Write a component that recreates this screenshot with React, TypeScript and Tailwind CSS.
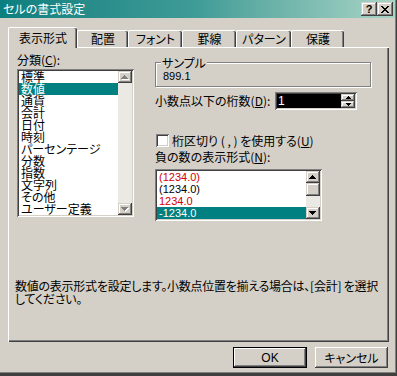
import React from "react";

const RAISED =
  "shadow-[inset_-1px_-1px_#404040,inset_1px_1px_#ffffff,inset_-2px_-2px_#808080]";
const RAISED_TB =
  "shadow-[inset_-1px_-1px_#404040,inset_1px_1px_#d4d0c8,inset_-2px_-2px_#808080,inset_2px_2px_#ffffff]";
const SUNKEN =
  "shadow-[inset_1px_1px_#808080,inset_-1px_-1px_#ffffff,inset_2px_2px_#404040,inset_-2px_-2px_#d4d0c8]";

function Arrow({ dir, disabled }: { dir: "up" | "down"; disabled?: boolean }) {
  const d =
    dir === "up"
      ? "M3 0h1v1h1v1h1v1h1v1H0V3h1V2h1V1h1z"
      : "M0 0h7v1h-1v1h-1v1h-1v1h-1v-1h-1v-1h-1v-1h-1z";
  return (
    <svg width="8" height="5" viewBox="0 0 8 5" shapeRendering="crispEdges">
      {disabled && <path d={d} fill="#ffffff" transform="translate(1,1)" />}
      <path d={d} fill={disabled ? "#808080" : "#000000"} />
    </svg>
  );
}

function SmallArrow({ dir }: { dir: "up" | "down" }) {
  const d =
    dir === "up"
      ? "M2 0h1v1h1v1h1v1H0V2h1V1h1z"
      : "M0 0h5v1h-1v1h-1v1h-1v-1h-1v-1h-1z";
  return (
    <svg width="5" height="3" viewBox="0 0 5 3" shapeRendering="crispEdges">
      <path d={d} fill="#000000" />
    </svg>
  );
}

function ScrollButton({ dir, disabled }: { dir: "up" | "down"; disabled?: boolean }) {
  return (
    <div
      className={`h-[12px] w-full bg-[#d4d0c8] ${RAISED_TB} flex items-center justify-center shrink-0`}
    >
      <Arrow dir={dir} disabled={disabled} />
    </div>
  );
}

function CloseGlyph() {
  return (
    <svg width="8" height="7" viewBox="0 0 8 7" shapeRendering="crispEdges">
      <path
        fill="#000000"
        d="M0 0h2v1H0z M6 0h2v1H6z M1 1h2v1H1z M5 1h2v1H5z M2 2h4v1H2z M3 3h2v1H3z M2 4h4v1H2z M1 5h2v1H1z M5 5h2v1H5z M0 6h2v1H0z M6 6h2v1H6z"
      />
    </svg>
  );
}

function Tab({ label, selected, w }: { label: string; selected?: boolean; w: string }) {
  if (selected) {
    return (
      <div
        className={`${w} h-[21px] -mb-px bg-[#d4d0c8] border-t border-l border-white rounded-tl-[2px] rounded-tr-[2px] shadow-[inset_-1px_0_#404040,inset_-2px_0_#808080] flex justify-center pt-[4px] leading-[12px] relative z-10`}
      >
        {label}
      </div>
    );
  }
  return (
    <div
      className={`${w} h-[17px] bg-[#d4d0c8] border-t border-l border-white rounded-tl-[2px] rounded-tr-[2px] shadow-[inset_-1px_0_#404040,inset_-2px_0_#808080] flex justify-center pt-[2px] leading-[12px]`}
    >
      {label}
    </div>
  );
}

const categories = [
  "標準",
  "数値",
  "通貨",
  "会計",
  "日付",
  "時刻",
  "パーセンテージ",
  "分数",
  "指数",
  "文字列",
  "その他",
  "ユーザー定義",
];

const negatives: { t: string; red: boolean }[] = [
  { t: "(1234.0)", red: true },
  { t: "(1234.0)", red: false },
  { t: "1234.0", red: true },
  { t: "-1234.0", red: false },
];

export default function App() {
  return (
    <div className="w-[397px] h-[376px] bg-[#404040] pr-px pb-[3px] overflow-hidden font-['Noto_Sans_CJK_JP','Noto_Sans',sans-serif] text-[12px] leading-[12px] text-black [font-feature-settings:'palt']">
      <div className="w-full h-full bg-[#808080] pr-px pb-px">
        <div className="w-full h-full bg-[#d4d0c8] flex flex-col">
          {/* Title bar */}
          <div className="h-[18px] shrink-0 flex items-center bg-linear-to-r from-[#0a7f7f] via-[#3f9c97] to-[#a8d5c6] pl-[3px] pr-[2px]">
            <span className="text-white text-[12px] leading-[12px]">セルの書式設定</span>
            <div className="ml-auto flex">
              <div
                className={`w-[16px] h-[14px] bg-[#d4d0c8] ${RAISED_TB} flex items-center justify-center text-[11px] font-bold leading-[11px] font-['Liberation_Sans',sans-serif]`}
              >
                ?
              </div>
              <div
                className={`w-[16px] h-[14px] bg-[#d4d0c8] ${RAISED_TB} flex items-center justify-center`}
              >
                <CloseGlyph />
              </div>
            </div>
          </div>

          {/* Tabs */}
          <div className="flex items-end h-[20px] mt-[9px] pl-[8px] shrink-0">
            <Tab label="表示形式" selected w="w-[69px]" />
            <Tab label="配置" w="w-[51px]" />
            <Tab label="フォント" w="w-[54px]" />
            <Tab label="罫線" w="w-[54px]" />
            <Tab label="パターン" w="w-[55px]" />
            <Tab label="保護" w="w-[53px]" />
          </div>

          {/* Panel */}
          <div className="ml-[8px] w-[381px] h-[295px] shrink-0 shadow-[inset_1px_1px_#ffffff,inset_-1px_-1px_#404040,inset_-2px_-2px_#808080] flex flex-col">
            <div className="flex">
              {/* Left column */}
              <div className="pl-[9px] pt-[7px] w-[126px] flex flex-col">
                <div className="h-[12px]">
                  分類(<span className="underline">C</span>):
                </div>
                <div className={`mt-[3px] w-[117px] h-[148px] bg-white ${SUNKEN} p-[2px] flex`}>
                  <div className="flex-1 flex flex-col">
                    {categories.map((c, i) => (
                      <div
                        key={c}
                        className={`h-[12px] pl-[2px] whitespace-nowrap leading-[12px] ${
                          i === 1 ? "bg-[#008080] text-white" : ""
                        }`}
                      >
                        {c}
                      </div>
                    ))}
                  </div>
                  <div className="w-[14px] flex flex-col bg-[#ebe9e4]">
                    <ScrollButton dir="up" disabled />
                    <div className="flex-1" />
                    <ScrollButton dir="down" disabled />
                  </div>
                </div>
              </div>

              {/* Right column */}
              <div className="ml-[21px] w-[216px] flex flex-col">
                {/* Sample group */}
                <div className="mt-[15px] h-[25px] relative border border-[#808080] shadow-[1px_1px_#ffffff,inset_1px_1px_#ffffff] pl-[7px] pt-[7px]">
                  <div className="absolute -top-[6px] left-[5px] px-[1px] bg-[#d4d0c8] leading-[12px]">
                    サンプル
                  </div>
                  <div className="leading-[12px] font-['Liberation_Sans',sans-serif] text-[11px]">899.1</div>
                </div>

                {/* Decimal places */}
                <div className="mt-[5px] h-[18px] flex items-center">
                  <div className="w-[120px] whitespace-nowrap">
                    小数点以下の桁数(<span className="underline">D</span>):
                  </div>
                  <div className={`w-[82px] h-[18px] bg-white ${SUNKEN} p-[2px] flex`}>
                    <div className="flex-1 bg-black text-white pl-[1px] flex items-center font-['Liberation_Sans',sans-serif] text-[12px]">
                      1
                    </div>
                    <div className="w-[14px] flex flex-col">
                      <div className={`flex-1 bg-[#d4d0c8] ${RAISED_TB} flex items-center justify-center`}>
                        <SmallArrow dir="up" />
                      </div>
                      <div className={`flex-1 bg-[#d4d0c8] ${RAISED_TB} flex items-center justify-center`}>
                        <SmallArrow dir="down" />
                      </div>
                    </div>
                  </div>
                </div>

                {/* Checkbox */}
                <div className="mt-[24px] h-[13px] flex items-center">
                  <div className={`ml-[1px] w-[13px] h-[13px] bg-white ${SUNKEN}`} />
                  <div className="ml-[3px] whitespace-nowrap">
                    桁区切り ( , ) を使用する(<span className="underline">U</span>)
                  </div>
                </div>

                {/* Negative numbers */}
                <div className="mt-[4px] h-[12px] whitespace-nowrap">
                  負の数の表示形式(<span className="underline">N</span>):
                </div>
                <div className={`mt-[6px] w-[167px] h-[52px] bg-white ${SUNKEN} p-[2px] flex`}>
                  <div className="flex-1 flex flex-col font-['Liberation_Sans',sans-serif] text-[11px]">
                    {negatives.map((n, i) => (
                      <div
                        key={i}
                        className={`h-[12px] leading-[12px] pl-[2px] ${
                          i === 3
                            ? "bg-[#008080] text-white"
                            : n.red
                            ? "text-[#d40000]"
                            : "text-black"
                        }`}
                      >
                        {n.t}
                      </div>
                    ))}
                  </div>
                  <div className="w-[14px] flex flex-col bg-[#ebe9e4]">
                    <ScrollButton dir="up" />
                    <div className={`h-[13px] bg-[#d4d0c8] ${RAISED_TB}`} />
                    <div className="flex-1" />
                    <ScrollButton dir="down" />
                  </div>
                </div>
              </div>
            </div>

            {/* Description */}
            <div className="mt-[58px] pl-[7px] leading-[13px] whitespace-nowrap tracking-[-0.25px]">
              数値の表示形式を設定します。小数点位置を揃える場合は、[会計] を選択
              <br />
              してください。
            </div>
          </div>

          {/* Buttons */}
          <div className="mt-[5px] flex justify-end gap-[8px] pr-[7px]">
            <div className="w-[74px] h-[21px] border border-black">
              <div className={`w-full h-full bg-[#d4d0c8] ${RAISED} flex items-center justify-center font-['Liberation_Sans',sans-serif] text-[12px]`}>
                OK
              </div>
            </div>
            <div className={`w-[73px] h-[21px] bg-[#d4d0c8] ${RAISED} flex items-center justify-center`}>
              キャンセル
            </div>
          </div>
        </div>
      </div>
    </div>
  );
}
